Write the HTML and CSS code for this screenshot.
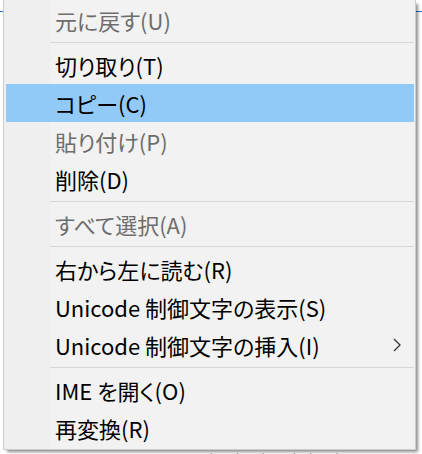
FILE: index.html
```html
<!DOCTYPE html>
<html lang="ja">
<head>
<meta charset="utf-8">
<title>Context menu</title>
<link rel="stylesheet" href="styles.css">
</head>
<body>
<div class="screen">
  <div class="menu">
    <div class="item disabled">元に戻す(U)</div>
    <div class="sep"></div>
    <div class="item">切り取り(T)</div>
    <div class="item active">コピー(C)</div>
    <div class="item disabled">貼り付け(P)</div>
    <div class="item">削除(D)</div>
    <div class="sep"></div>
    <div class="item disabled">すべて選択(A)</div>
    <div class="sep"></div>
    <div class="item">右から左に読む(R)</div>
    <div class="item">Unicode 制御文字の表示(S)</div>
    <div class="item has-sub">
      <span>Unicode 制御文字の挿入(I)</span>
      <svg class="chev" width="8" height="14" viewBox="0 0 8 14"><polyline points="1,1 7,7 1,13" fill="none" stroke="#333" stroke-width="1.3"/></svg>
    </div>
    <div class="sep"></div>
    <div class="item">IME を開く(O)</div>
    <div class="item">再変換(R)</div>
  </div>
  <div class="under">(Y) (W)(X) I|I</div>
</div>
</body>
</html>
```
FILE: styles.css
```css
html, body {
  margin: 0;
  padding: 0;
}
body {
  width: 422px;
  height: 454px;
  overflow: hidden;
  background: #ffffff linear-gradient(to bottom, transparent 11px, #1f6fd1 11px, #1f6fd1 12px, transparent 12px);
  font-family: "Noto Sans CJK JP", "Noto Sans", sans-serif;
}
.screen {
  display: flex;
  flex-direction: column;
}
.menu {
  margin-left: 3px;
  width: 413px;
  box-sizing: border-box;
  border: 1px solid #cccccc;
  border-top: none;
  padding: 1px 0 2px 0;
  background: linear-gradient(to right, #efefef 46px, #f2f2f2 46px);
  box-shadow: 3px 3px 3px -1px rgba(0, 0, 0, 0.45);
  position: relative;
  z-index: 1;
}
.item {
  height: 38px;
  margin: 0 1px 0 2px;
  padding: 0 13px 0 49px;
  display: flex;
  align-items: center;
  justify-content: space-between;
  font-size: 22px;
  line-height: 38px;
  color: #000000;
  font-feature-settings: "palt";
  white-space: nowrap;
}
.item.disabled {
  color: #6d6d6d;
}
.item.active {
  background: #91c9f7;
}
.chev {
  display: block;
}
.sep {
  height: 1px;
  margin: 3px 1px 3px 46px;
  background: #d7d7d7;
}
.under {
  margin: 0 0 0 205px;
  font-size: 22px;
  line-height: 22px;
  color: #333333;
  font-family: "Liberation Serif", serif;
  letter-spacing: 4px;
}
```
